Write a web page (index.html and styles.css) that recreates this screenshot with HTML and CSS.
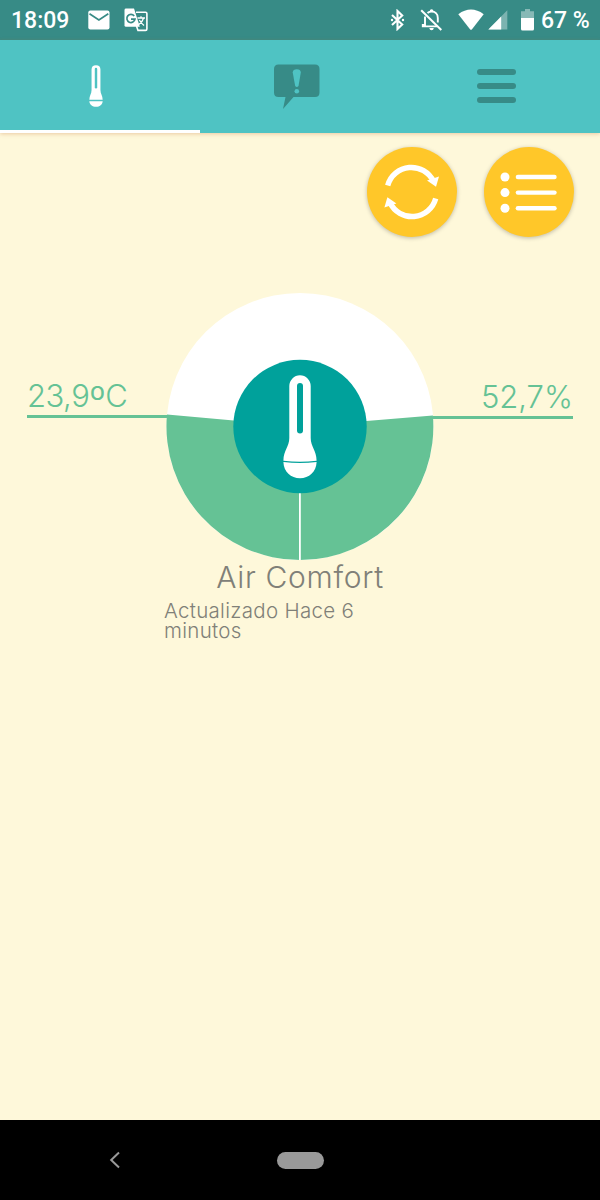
FILE: index.html
```html
<!DOCTYPE html>
<html lang="es">
<head>
    <meta charset="UTF-8">
    <meta name="viewport" content="width=device-width, initial-scale=1.0">
    <title>Air Comfort</title>
    <link rel="stylesheet" href="styles.css">
</head>
<body>
    <div class="screen">
        <header class="status-bar">
            <span class="clock">18:09</span>
            <svg class="icon-mail" width="22" height="20" viewBox="0 0 22 20">
                <rect x="0.3" y="0.5" width="21.2" height="19" rx="2" fill="#fff"/>
                <path d="M1.5 3.8 L10.9 10 L20.3 3.8" fill="none" stroke="#378b86" stroke-width="1.7"/>
            </svg>
            <svg class="icon-translate" width="25" height="24" viewBox="0 0 25 24">
                <path d="M12 4.2 H21.5 Q22.9 4.2 22.9 5.6 V21 Q22.9 22.4 21.5 22.4 H14 L12.5 18" fill="none" stroke="#fff" stroke-width="1.6"/>
                <path d="M2 .6 H10 L15.8 18.8 H2 Q.5 18.8 .5 17.3 V2 Q.5 .6 2 .6Z" fill="#fff"/>
                <path d="M10.2 7.9 A4.1 4.1 0 1 0 11 11.2 H7" fill="none" stroke="#378b86" stroke-width="1.7"/>
                <path d="M13.5 10 H21 M17 8.2 V10 M19.6 10 Q18.5 14 14.8 16.5 M15.4 12 Q17 15 20 17.6" fill="none" stroke="#fff" stroke-width="1.3"/>
            </svg>
            <div class="status-right">
                <svg class="icon-bluetooth" width="16" height="22" viewBox="0 0 16 22">
                    <path d="M3 6 L13.2 15.5 L8.5 20 V2 L13.2 6.5 L3 16" fill="none" stroke="#fff" stroke-width="2.1"/>
                    <circle cx="3" cy="11" r="1.2" fill="#fff"/>
                    <circle cx="14" cy="11" r="1.2" fill="#fff"/>
                </svg>
                <svg class="icon-bell" width="23" height="24" viewBox="0 0 23 24">
                    <path d="M5 8.5 V17 H2.8 V18.4 H17 M17.8 14.5 V10 C17.8 6 15 3.5 11.6 3.5 Q9.2 3.5 7.5 5" fill="none" stroke="#fff" stroke-width="1.9"/>
                    <path d="M10 4 V2 Q11.6 .4 13.2 2 V4Z M9.3 20 H13.8 Q13.5 22.3 11.6 22.3 T9.3 20Z" fill="#fff"/>
                    <path d="M1.2 2.2 L21.3 22" stroke="#fff" stroke-width="2"/>
                </svg>
                <svg class="icon-wifi" width="26" height="22" viewBox="0 0 26 22">
                    <path d="M.3 5.2 Q13 -4 25.7 5.2 L14 20.3 Q13 21.4 12 20.3Z" fill="#fff"/>
                </svg>
                <svg class="icon-signal" width="20" height="20" viewBox="0 0 20 20">
                    <path d="M19.3 .3 V19.5 H.3Z" fill="#fff" opacity=".35"/>
                    <path d="M13.2 6.4 V19.5 H.3Z" fill="#fff"/>
                </svg>
                <svg class="icon-battery" width="13" height="22" viewBox="0 0 13 22">
                    <path d="M4 0 H9 V2.2 H13 V9 H0 V2.2 H4Z" fill="#fff" opacity=".4"/>
                    <path d="M0 9 H13 V20 Q13 21.5 11.5 21.5 H1.5 Q0 21.5 0 20Z" fill="#fff"/>
                </svg>
                <span class="charge">67 %</span>
            </div>
        </header>

        <nav class="tabs">
            <a class="tab active">
                <svg class="tab-thermo" width="14" height="42" viewBox="0 0 34 104">
                    <path d="M6 11 Q6 .5 17 .5 T28 11 V62 C28 72 33.5 76 33.5 86 H.5 C.5 76 6 72 6 62Z" fill="#fff"/>
                    <path d="M.5 89.5 H33.5 C33 98 26 103.5 17 103.5 S1 98 .5 89.5Z" fill="#fff"/>
                    <path d="M17 10 V55" stroke="#4fc3c3" stroke-width="6" stroke-linecap="round"/>
                </svg>
            </a>
            <a class="tab">
                <svg class="tab-alert" width="46" height="46" viewBox="0 0 46 46">
                    <path d="M4.5 .5 H41 Q45.5 .5 45.5 5 V28.5 Q45.5 33 41 33 H19.5 L9 45 L11.5 33 H4.5 Q0 33 0 28.5 V5 Q0 .5 4.5 .5Z" fill="#378b87"/>
                    <path d="M18.7 8.5 Q19 5.3 22.8 5.3 T26.8 8.5 L24.5 22 Q22.8 24 21.2 22Z" fill="#4fc3c3"/>
                    <circle cx="22.8" cy="27.3" r="2.3" fill="#4fc3c3"/>
                </svg>
            </a>
            <a class="tab">
                <span class="burger"><i></i><i></i><i></i></span>
            </a>
        </nav>

        <main class="content">
            <div class="actions">
                <button class="round-btn">
                    <svg width="90" height="90" viewBox="0 0 90 90">
                        <g id="arrow">
                            <path d="M20.7 38.5 A24.5 24.5 0 0 1 66.5 34.5" fill="none" stroke="#fff" stroke-width="5.4"/>
                            <path d="M60 33.5 L72 29.5 L69 39.8Z" fill="#fff"/>
                        </g>
                        <use href="#arrow" transform="rotate(180 44.7 45)"/>
                    </svg>
                </button>
                <button class="round-btn">
                    <svg width="90" height="90" viewBox="0 0 90 90">
                        <g fill="#fff">
                            <circle cx="21" cy="30" r="4.5"/>
                            <circle cx="21" cy="45.6" r="4.5"/>
                            <circle cx="21" cy="61.2" r="4.5"/>
                            <rect x="31.7" y="27.8" width="41" height="4.4" rx="2.2"/>
                            <rect x="31.7" y="43.4" width="41" height="4.4" rx="2.2"/>
                            <rect x="31.7" y="59" width="41" height="4.4" rx="2.2"/>
                        </g>
                    </svg>
                </button>
            </div>

            <section class="gauge">
                <div class="reading temperature">23,9<span class="ordinal">º</span>C</div>
                <svg class="dial" width="268" height="267" viewBox="-0.5 0 268 267">
                    <circle cx="133.5" cy="133.5" r="133.5" fill="#fff"/>
                    <path d="M133.5 133.5 L.5 121.4 A133.5 133.5 0 0 0 133.5 267 A133.5 133.5 0 0 0 266.4 122.4Z" fill="#65c295"/>
                    <path d="M133.4 133.5 V267" stroke="#fff" stroke-width="1.8"/>
                    <circle cx="133.5" cy="133.5" r="66.7" fill="#00a19b"/>
                    <g transform="translate(116.5 82)">
                        <path d="M6.3 11 A10.7 10.7 0 0 1 27.7 11 V63 C27.7 72 33.5 75 33.6 85.7 Q17 87.6 .4 85.7 C.5 75 6.3 72 6.3 63Z" fill="#fff"/>
                        <path d="M.4 87 Q17 88.9 33.6 87 C33.3 97 26 103.2 17 103.2 S.7 97 .4 87Z" fill="#fff"/>
                        <path d="M17 11 V55.5" stroke="#00a19b" stroke-width="6" stroke-linecap="round"/>
                    </g>
                </svg>
                <div class="reading humidity">52,7%</div>
            </section>

            <h1 class="title">Air Comfort</h1>
            <p class="updated">Actualizado Hace 6 minutos</p>
        </main>

        <footer class="nav-bar">
            <svg class="back" width="12" height="18" viewBox="0 0 12 18">
                <path d="M10 1.5 L2.2 9 L10 16.5" fill="none" stroke="#999" stroke-width="2"/>
            </svg>
            <span class="home"></span>
        </footer>
    </div>
</body>
</html>
```
FILE: styles.css
```css
* {
    margin: 0;
    padding: 0;
    box-sizing: border-box;
}

body {
    font-family: Inter, "Open Sans", sans-serif;
    background: #fef8da;
}

svg {
    display: block;
    flex: none;
}

.screen {
    width: 600px;
    height: 1200px;
    display: flex;
    flex-direction: column;
    overflow: hidden;
}

/* Status bar */
.status-bar {
    height: 40px;
    display: flex;
    align-items: center;
    padding: 0 10px 0 11px;
    background: #378b86;
    color: #fff;
    font: 500 23px/40px Roboto, sans-serif;
}

.clock {
    width: 77px;
    padding-top: 2px;
    white-space: nowrap;
}

.icon-translate {
    margin-left: 14px;
}

.status-right {
    display: flex;
    align-items: center;
    margin-left: auto;
}

.icon-bell {
    margin-left: 15px;
}

.icon-wifi {
    margin-left: 15px;
}

.icon-signal {
    margin-left: 4px;
}

.icon-battery {
    margin-left: 13px;
}

.charge {
    width: 49px;
    margin-left: 7px;
    padding-top: 2px;
    white-space: nowrap;
}

/* Tabs */
.tabs {
    height: 93px;
    display: flex;
    flex: none;
    background: #4fc3c3;
    box-shadow: 0 1px 4px rgba(190, 100, 40, 0.3);
}

.tab {
    width: 200px;
    display: flex;
    justify-content: center;
    align-items: flex-start;
    padding-top: 25px;
}

.tab.active {
    border-bottom: 3px solid #fff;
}

.tab-thermo {
    margin-right: 8px;
}

.tab-alert {
    margin: -1px 7px 0 0;
}

.burger {
    display: flex;
    flex-direction: column;
    gap: 7.5px;
    margin: 3.5px 7px 0 0;
}

.burger i {
    width: 39px;
    height: 6.5px;
    border-radius: 3px;
    background: #378b87;
}

/* Content */
.content {
    flex: 1;
}

.actions {
    display: flex;
    justify-content: flex-end;
    gap: 27px;
    padding: 14px 26.5px 0 0;
}

.round-btn {
    width: 90px;
    height: 90px;
    border: none;
    border-radius: 50%;
    background: #ffc729;
    box-shadow: 0 1px 4px rgba(0, 0, 0, 0.25);
}

.gauge {
    display: flex;
    justify-content: center;
    margin-top: 56px;
}

.reading {
    width: 140px;
    height: 125px;
    display: flex;
    align-items: flex-end;
    border-bottom: 3px solid #65c295;
    color: #65c295;
    font-size: 31px;
    font-weight: 300;
    line-height: 38px;
    white-space: nowrap;
}

.temperature {
    margin-right: -1px;
    letter-spacing: -0.5px;
}

.ordinal {
    margin-bottom: -3px;
    font-size: 38px;
}

.humidity {
    height: 126px;
    margin-left: -1px;
    justify-content: flex-end;
}

.title {
    margin-top: -2px;
    color: #808078;
    font-size: 30px;
    font-weight: 300;
    letter-spacing: 0.7px;
    line-height: 38px;
    text-align: center;
}

.updated {
    width: 200px;
    margin: 5px 0 0 164px;
    color: #808078;
    font-size: 20.5px;
    font-weight: 300;
    letter-spacing: 0.3px;
    line-height: 20px;
}

/* Android navigation bar */
.nav-bar {
    height: 80px;
    display: flex;
    align-items: center;
    padding-left: 109px;
    background: #000;
}

.home {
    width: 47px;
    height: 17px;
    margin-left: 156px;
    border-radius: 9px;
    background: #999;
}
```
